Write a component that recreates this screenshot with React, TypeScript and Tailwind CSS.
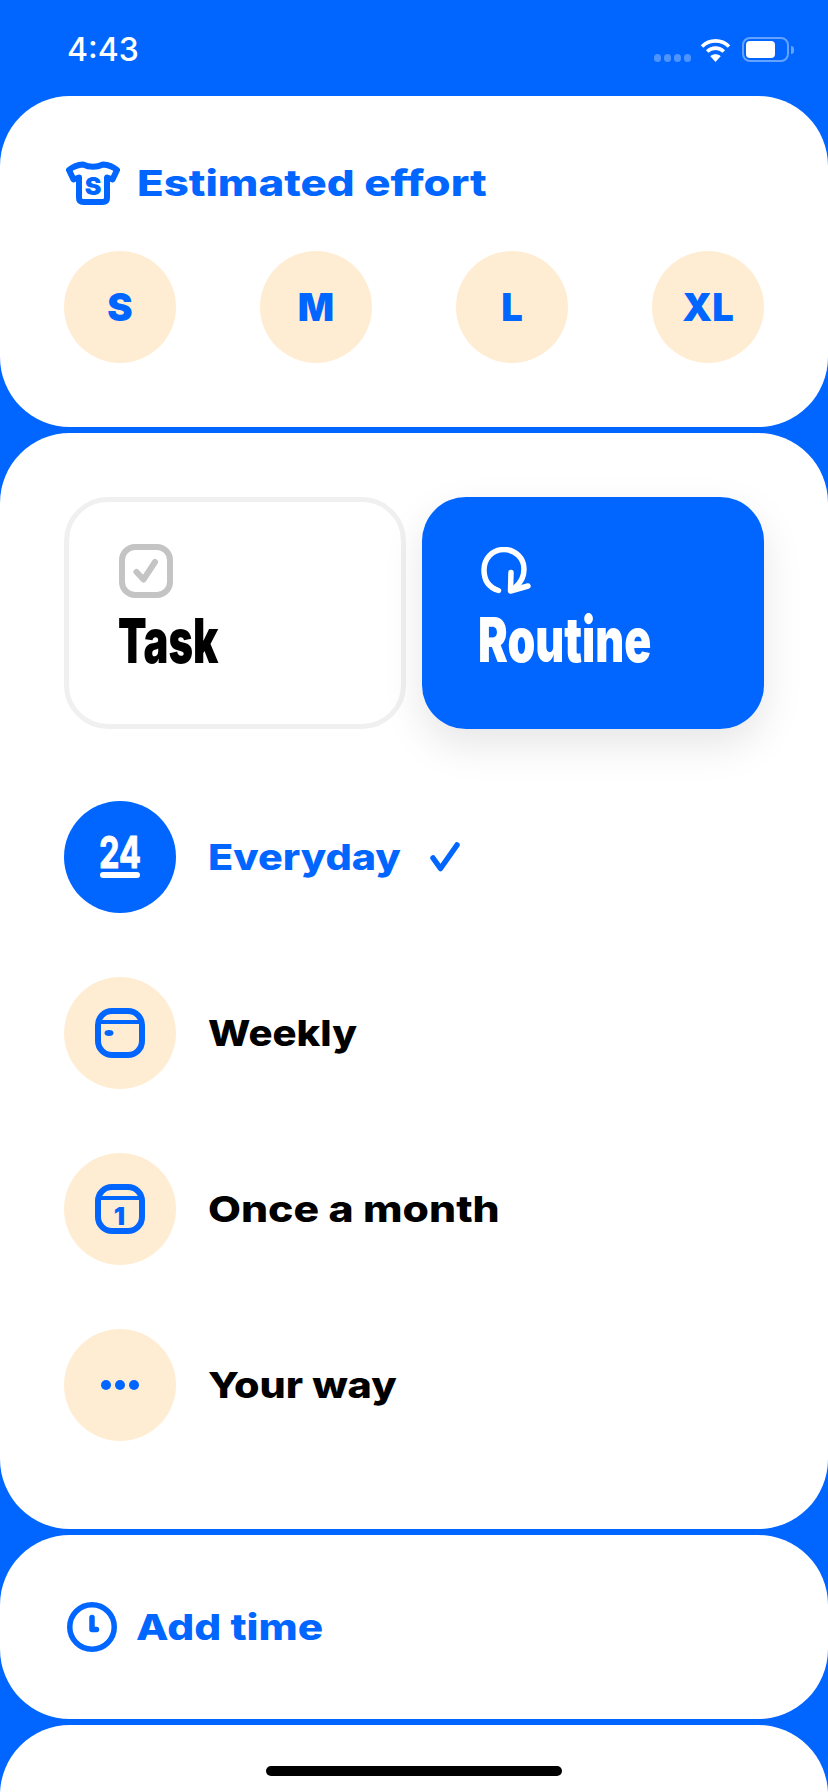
import React from "react";

const BLUE = "#0066ff";

const ShirtIcon = () => (
  <svg width="54" height="44" viewBox="0 0 54 44" fill="none">
    <path
      d="M17 3.5Q27 8 37 3.5Q45 4 51 9L46.5 18.5L41 16.5V37Q41 41 36.5 41H17.5Q13 41 13 37V16.5L7.5 18.5L3 9Q9 4 17 3.5Z"
      stroke={BLUE}
      strokeWidth="6"
      strokeLinejoin="round"
    />
    <text x="27" y="33.5" textAnchor="middle" fontFamily="Inter" fontWeight="900" fontSize="25" fill={BLUE}>
      S
    </text>
  </svg>
);

const TaskIcon = () => (
  <svg width="54" height="54" viewBox="0 0 54 54" fill="none">
    <rect x="3" y="3" width="48" height="48" rx="13" stroke="#c4c4c4" strokeWidth="6" />
    <path d="M17.5 28L24.5 35.5L36 18" stroke="#c4c4c4" strokeWidth="6" strokeLinecap="round" strokeLinejoin="round" />
  </svg>
);

const RoutineIcon = () => (
  <svg width="51" height="47" viewBox="0 0 50 47" fill="none">
    <path
      d="M17 43.5C7.5 40.5 2.5 33 2.5 23C2.5 11.5 11 2.5 22.5 2.5C34 2.5 42.5 11.5 42.5 22C42.5 29 40 35 34 40"
      stroke="white"
      strokeWidth="5.5"
      strokeLinecap="round"
    />
    <path d="M29.5 25.5L29 44L46.5 39" stroke="white" strokeWidth="5.5" strokeLinecap="round" strokeLinejoin="round" />
  </svg>
);

const EverydayIcon = () => (
  <svg width="46" height="60" viewBox="-2 -8 46 60" fill="none">
    <text
      transform="translate(21 33) scale(0.74 1)"
      textAnchor="middle"
      fontFamily="Inter"
      fontWeight="700"
      fontSize="44"
      fill="white"
      stroke="white"
      strokeWidth="1"
      strokeLinejoin="round"
    >
      24
    </text>
    <rect x="1" y="37" width="40" height="6" rx="3" fill="white" />
  </svg>
);

const WeeklyIcon = () => (
  <svg width="50" height="50" viewBox="0 0 50 50" fill="none">
    <rect x="3" y="3" width="44" height="44" rx="14" stroke={BLUE} strokeWidth="6" />
    <path d="M3 14H47" stroke={BLUE} strokeWidth="4" />
    <ellipse cx="14" cy="25" rx="4.5" ry="3" fill={BLUE} />
  </svg>
);

const MonthlyIcon = () => (
  <svg width="50" height="50" viewBox="0 0 50 50" fill="none">
    <rect x="3" y="3" width="44" height="44" rx="14" stroke={BLUE} strokeWidth="6" />
    <path d="M3 14H47" stroke={BLUE} strokeWidth="4" />
    <text x="24.5" y="41" textAnchor="middle" fontFamily="Inter" fontWeight="900" fontSize="25" fill={BLUE}>
      1
    </text>
  </svg>
);

const DotsIcon = () => (
  <svg width="38" height="10" viewBox="0 0 38 10" fill={BLUE}>
    <circle cx="5" cy="5" r="5" />
    <circle cx="19" cy="5" r="5" />
    <circle cx="33" cy="5" r="5" />
  </svg>
);

const ClockIcon = () => (
  <svg width="50" height="50" viewBox="0 0 50 50" fill="none">
    <circle cx="25" cy="25" r="22.25" stroke={BLUE} strokeWidth="5.5" />
    <path d="M25 15.5V27.5H29.5" stroke={BLUE} strokeWidth="5.5" strokeLinecap="round" strokeLinejoin="round" />
  </svg>
);

const WifiIcon = () => (
  <svg width="31" height="24" viewBox="0 0 31 24" fill="none">
    <path d="M2 8.5C9.5 1 21.5 1 29 8.5" stroke="white" strokeWidth="3.6" />
    <path d="M7.2 13.5C11.8 9 19.2 9 23.8 13.5" stroke="white" strokeWidth="3.6" />
    <path d="M15.5 24L10.3 18.2C13.2 15.6 17.8 15.6 20.7 18.2Z" fill="white" />
  </svg>
);

const sizes = ["S", "M", "L", "XL"];

const options = [
  { label: "Everyday", icon: <EverydayIcon />, active: true, stretch: "scale-x-[1.147]" },
  { label: "Weekly", icon: <WeeklyIcon />, active: false, stretch: "scale-x-[1.113]" },
  { label: "Once a month", icon: <MonthlyIcon />, active: false, stretch: "scale-x-[1.186]" },
  { label: "Your way", icon: <DotsIcon />, active: false, stretch: "scale-x-[1.147]" },
];

const App = () => {
  return (
    <div className="relative h-[1792px] w-[828px] overflow-hidden bg-[#0066ff] font-[Inter,sans-serif]">
      <div className="flex h-[96px] items-start justify-between pl-[67px] pr-[34px] pt-[30px]">
        <span className="text-[32px] font-medium leading-[40px] text-white">4:43</span>
        <div className="-mt-px flex items-center pt-[8px]">
          <div className="mr-[9px] mt-[16px] flex gap-[3px]">
            <span className="h-[8px] w-[7px] rounded-full bg-[#4d94ff]"></span>
            <span className="h-[8px] w-[7px] rounded-full bg-[#4d94ff]"></span>
            <span className="h-[8px] w-[7px] rounded-full bg-[#4d94ff]"></span>
            <span className="h-[8px] w-[7px] rounded-full bg-[#4d94ff]"></span>
          </div>
          <WifiIcon />
          <div className="ml-[11px] flex h-[25px] w-[47px] items-center rounded-[8px] border-2 border-[#66a3ff] pl-[2px]">
            <div className="h-[17px] w-[29px] rounded-[4px] bg-white"></div>
          </div>
          <div className="ml-[2px] h-[8px] w-[3px] rounded-r-full bg-[#66a3ff]"></div>
        </div>
      </div>

      <div className="flex flex-col gap-[6px]">
        <section className="flex h-[331px] flex-col justify-between rounded-[70px] bg-white px-[64px] pb-[64px] pt-[65px]">
          <div className="flex items-center gap-[17px] pl-[2px]">
            <ShirtIcon />
            <span className="origin-left scale-x-[1.215] text-[36px] font-extrabold leading-[44px] text-[#0066ff]">
              Estimated effort
            </span>
          </div>
          <div className="flex justify-between">
            {sizes.map((size) => (
              <div
                key={size}
                className="flex size-[112px] items-center justify-center rounded-full bg-[#ffedd3] text-[38px] font-black text-[#0066ff]"
              >
                {size}
              </div>
            ))}
          </div>
        </section>

        <section className="h-[1096px] rounded-[70px] bg-white px-[64px] pt-[64px]">
          <div className="grid grid-cols-2 gap-[16px]">
            <div className="h-[232px] rounded-[44px] border-[5px] border-[#f0f0f0] pl-[50px] pt-[42px]">
              <TaskIcon />
              <div className="-ml-px mt-[8px] origin-left scale-x-[0.673] text-[62px] font-black leading-[70px] text-black">
                Task
              </div>
            </div>
            <div className="h-[232px] rounded-[44px] bg-[#0066ff] pl-[56px] pt-[50px] shadow-[0_16px_40px_rgba(0,0,0,0.1)]">
              <div className="pl-[3px]">
                <RoutineIcon />
              </div>
              <div className="mt-[11px] origin-left scale-x-[0.72] text-[62px] font-black leading-[70px] text-white">
                Routine
              </div>
            </div>
          </div>

          <div className="mt-[72px] flex flex-col gap-[64px]">
            {options.map((option) => (
              <div key={option.label} className="flex items-center gap-[32px]">
                <div
                  className={`flex size-[112px] items-center justify-center rounded-full ${
                    option.active ? "bg-[#0066ff]" : "bg-[#ffedd3]"
                  }`}
                >
                  {option.icon}
                </div>
                <span
                  className={`origin-left text-[36px] font-extrabold leading-[44px] ${option.stretch} ${
                    option.active ? "text-[#0066ff]" : "text-black"
                  }`}
                >
                  {option.label}
                </span>
                {option.active && (
                  <svg className="ml-[22px]" width="30" height="30" viewBox="0 0 30 30" fill="none">
                    <path d="M3 16L10.5 26.5L27 3" stroke={BLUE} strokeWidth="5.5" strokeLinecap="round" strokeLinejoin="round" />
                  </svg>
                )}
              </div>
            ))}
          </div>
        </section>

        <section className="flex h-[184px] items-center gap-[19px] rounded-[70px] bg-white pl-[67px]">
          <ClockIcon />
          <span className="origin-left scale-x-[1.175] text-[36px] font-extrabold leading-[44px] text-[#0066ff]">
            Add time
          </span>
        </section>

        <section className="h-[140px] rounded-[70px] bg-white"></section>
      </div>

      <div className="absolute bottom-[16px] left-[266px] h-[10px] w-[296px] rounded-full bg-black"></div>
    </div>
  );
};

export default App;
